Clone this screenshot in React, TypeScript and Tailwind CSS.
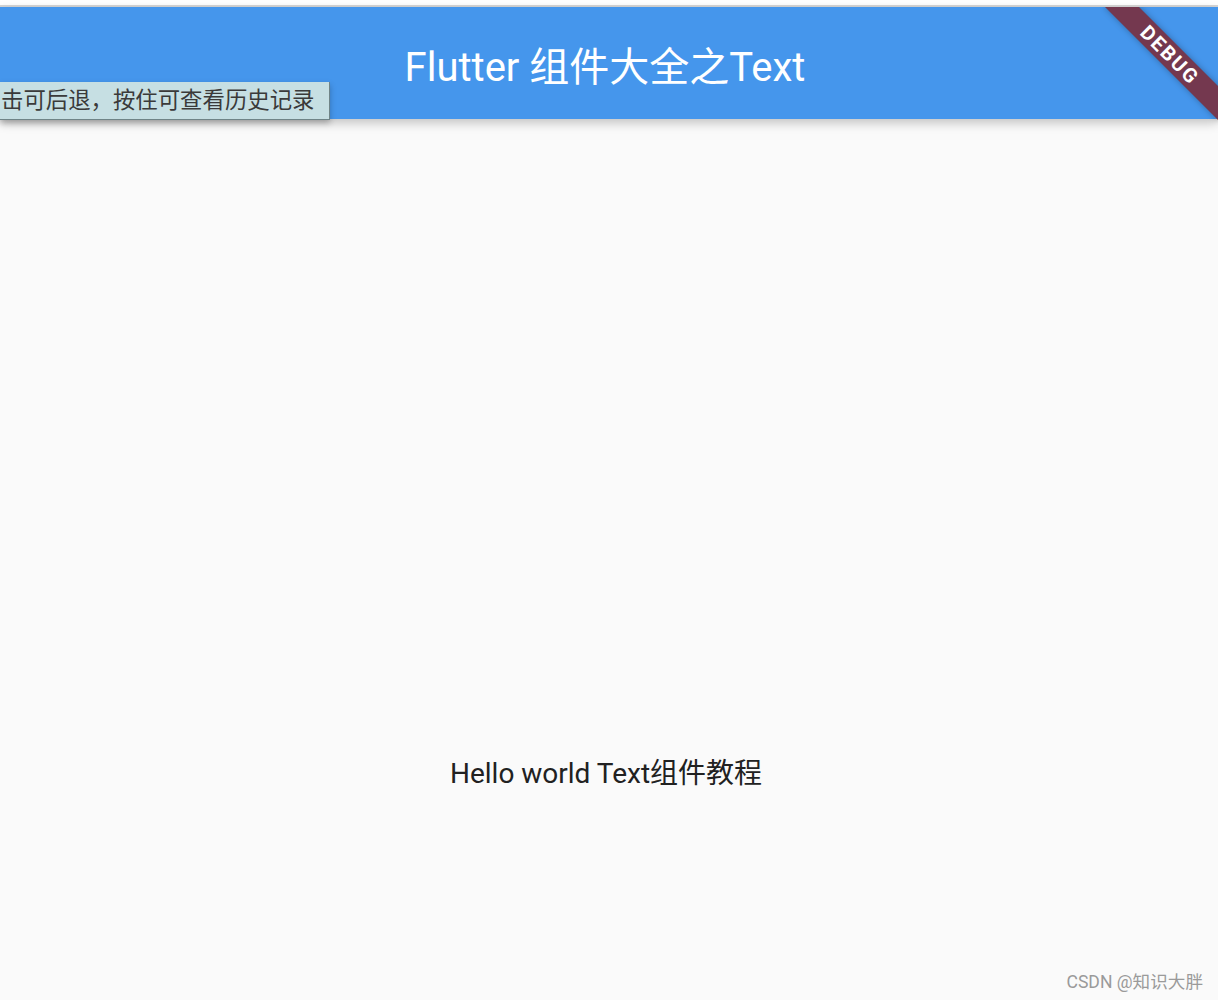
const font = "font-['Roboto','Noto_Sans_CJK_SC',sans-serif]";

const DebugBanner = () => {
  return (
    <div className="pointer-events-none absolute inset-0 z-20 overflow-hidden">
      <div className="absolute top-[36px] right-[-32px] flex h-[24px] w-[160px] rotate-45 items-center justify-center bg-[#74384f] shadow-[0_0_6px_rgba(0,0,0,0.3)]">
        <span className="font-['Roboto',sans-serif] text-[20px] leading-none font-bold tracking-[2px] text-white">
          DEBUG
        </span>
      </div>
    </div>
  );
};

const AppBar = () => {
  return (
    <header className="relative z-10 flex h-[112px] items-center justify-center bg-[#4596ec] shadow-[0_4px_10px_rgba(0,0,0,0.22)]">
      <h1 className={`${font} pt-[10px] pr-[8px] text-[40px] font-normal leading-none text-white`}>
        Flutter 组件大全之Text
      </h1>
      <div className="absolute top-[75px] left-0 flex h-[38px] w-[330px] items-center border-r border-b border-[#6f8487] bg-[#c6dfe3] pl-[1px] shadow-[0_3px_6px_rgba(0,0,0,0.25)]">
        <span className={`${font} text-[22.4px] leading-none text-[#3a3a3a]`}>
          击可后退，按住可查看历史记录
        </span>
      </div>
    </header>
  );
};

export default function App() {
  return (
    <div className="relative h-[1000px] w-full overflow-hidden bg-[#fafafa]">
      <div className="h-[5px] bg-white" />
      <div className="h-[2px] bg-[#d6d6d6]" />
      <div className="relative">
        <AppBar />
        <main className="flex flex-col items-center pt-[638px] pr-[6px]">
          <p className={`${font} text-[28px] leading-[34px] text-[#212121]`}>
            Hello world Text组件教程
          </p>
        </main>
        <DebugBanner />
      </div>
      <span className={`${font} absolute right-[15px] bottom-[5px] text-[17.6px] text-[#9a9a9a]`}>
        CSDN @知识大胖
      </span>
    </div>
  );
}
